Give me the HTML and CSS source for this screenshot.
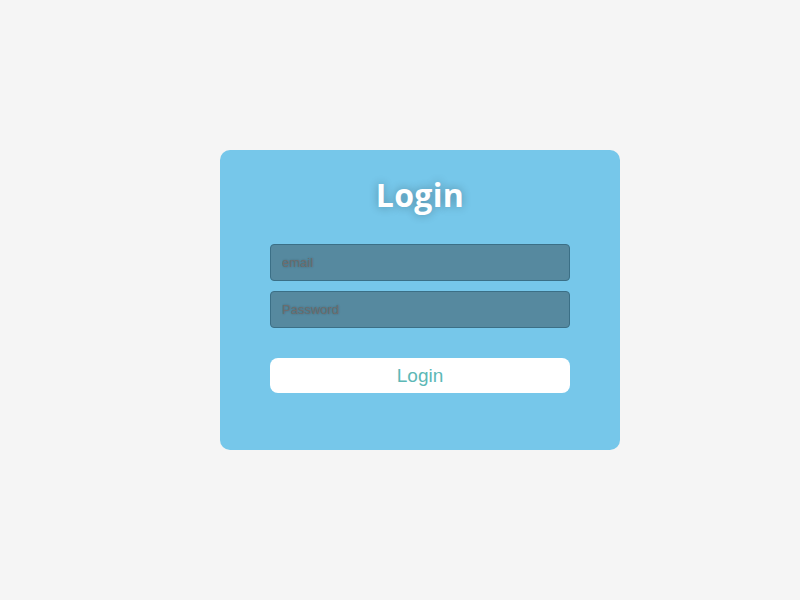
FILE: index.html
```html
<!DOCTYPE html>
<html>
<head>
<meta charset="utf-8">
<link rel="stylesheet" href="styles.css">
</head>
<body>
<div class="page">
  <form class="card">
    <h1 class="title">Login</h1>
    <input class="field" type="text" placeholder="email">
    <input class="field" type="password" placeholder="Password">
    <button class="btn" type="button">Login</button>
  </form>
</div>
</body>
</html>
```
FILE: styles.css
```css
html, body {
  margin: 0;
  padding: 0;
  background: #f5f5f5;
  font-family: "Liberation Sans", Arial, sans-serif;
}
.page {
  height: 600px;
  display: flex;
  align-items: center;
  justify-content: center;
  padding-left: 40px;
  box-sizing: border-box;
}
.card {
  width: 400px;
  height: 300px;
  box-sizing: border-box;
  background: #76c7ea;
  border-radius: 10px;
  padding: 27px 50px 0;
  display: flex;
  flex-direction: column;
}
.title {
  margin: 0 0 31px;
  text-align: center;
  color: #fff;
  font-family: "Open Sans", sans-serif;
  font-weight: 700;
  font-size: 32px;
  line-height: 36px;
  letter-spacing: 0.3px;
  text-shadow: 0 0 10px rgba(0, 0, 0, 0.3);
}
.field {
  height: 37px;
  box-sizing: border-box;
  margin: 0 0 10px;
  padding: 0 11px;
  background: #56899f;
  border: 1px solid #3b6f86;
  border-radius: 4px;
  font-family: "Liberation Sans", Arial, sans-serif;
  font-size: 13px;
  color: #333;
  outline: none;
}
.field::placeholder {
  color: #6d6d6d;
  text-shadow: 0 0 2px rgba(0,0,0,0.3);
}
.btn {
  margin-top: 20px;
  height: 35px;
  border: none;
  border-radius: 8px;
  background: #fff;
  color: #5cb8b6;
  font-family: "Liberation Sans", Arial, sans-serif;
  font-size: 19px;
  padding: 0;
}
```
